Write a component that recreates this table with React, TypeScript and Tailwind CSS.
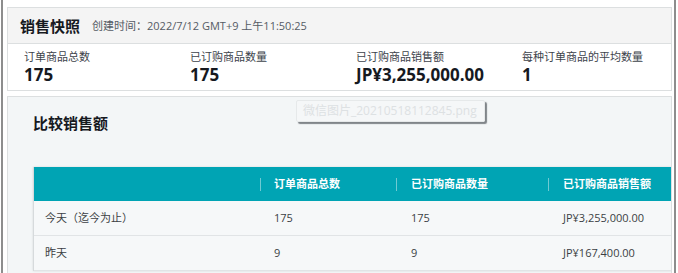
const metrics = [
  { label: "订单商品总数", value: "175" },
  { label: "已订购商品数量", value: "175" },
  { label: "已订购商品销售额", value: "JP¥3,255,000.00" },
  { label: "每种订单商品的平均数量", value: "1" },
];

const rows = [
  { name: "今天（迄今为止）", units: "175", ordered: "175", sales: "JP¥3,255,000.00" },
  { name: "昨天", units: "9", ordered: "9", sales: "JP¥167,400.00" },
];

const font = { fontFamily: '"Open Sans", "Noto Sans CJK SC", sans-serif' };

export default function App() {
  return (
    <div className="relative h-[273px] w-[678px] overflow-hidden bg-white" style={font}>
      <div className="ml-px mr-[2px] h-full border-x-2 border-[#8d8d8d] bg-white pl-[4px] pr-[1px] pt-[7px]">
        {/* snapshot card */}
        <div className="w-[665px] border border-[#dcdfe0] bg-white">
          <div className="flex h-[36px] items-center gap-3 border-b border-[#dcdfe0] bg-[#f4f4f4] pl-[12px] pt-[1px]">
            <h1 className="text-[15px] font-bold leading-none text-[#16191f]">销售快照</h1>
            <span className="text-[11px] text-[#545b64]">创建时间：2022/7/12 GMT+9 上午11:50:25</span>
          </div>
          <div className="grid h-[46px] grid-cols-[166px_166px_166px_166px] pl-[16px] pt-[5px]">
            {metrics.map((m) => (
              <div key={m.label} className="flex flex-col gap-[2px]">
                <p className="whitespace-nowrap text-[11px] leading-[15px] text-[#3d434b]">{m.label}</p>
                <p className="whitespace-nowrap text-[17px] font-bold leading-[18px] text-[#16191f]">{m.value}</p>
              </div>
            ))}
          </div>
        </div>

        {/* compare card */}
        <div className="mt-[5px] h-[200px] w-[665px] overflow-hidden border border-[#dcdfe0] bg-[#f3f6f7]">
          <h2 className="pl-[25px] pt-[15px] text-[15px] font-bold leading-[22px] text-[#16191f]">比较销售额</h2>
          <div className="ml-[25px] mt-[33px] w-[700px] border-l border-[#d6dadc] shadow-[0_0_2px_rgba(0,0,0,0.12)]">
            <div className="flex h-[34px] items-center bg-[#00a4b4] text-[11px] font-bold text-white">
              <div className="w-[226px]" />
              <div className="flex w-[136px] items-center">
                <span className="h-[13px] w-px bg-[#6fcad3]" />
                <span className="pl-[13px]">订单商品总数</span>
              </div>
              <div className="flex w-[152px] items-center">
                <span className="h-[13px] w-px bg-[#6fcad3]" />
                <span className="pl-[14px]">已订购商品数量</span>
              </div>
              <div className="flex flex-1 items-center">
                <span className="h-[13px] w-px bg-[#6fcad3]" />
                <span className="pl-[14px]">已订购商品销售额</span>
              </div>
            </div>
            {rows.map((r) => (
              <div
                key={r.name}
                className="flex h-[35px] items-center border-b border-[#e1e4e6] bg-[#f6f8f9] text-[11px] text-[#3b3f44]"
              >
                <div className="w-[226px] pl-[11px]">{r.name}</div>
                <div className="w-[136px] pl-[14px]">{r.units}</div>
                <div className="w-[152px] pl-[15px]">{r.ordered}</div>
                <div className="flex-1 pl-[15px]">{r.sales}</div>
              </div>
            ))}
          </div>
        </div>
      </div>

      {/* dragged file ghost */}
      <div className="absolute left-[296px] top-[100px] flex h-[22px] w-[189px] items-center overflow-hidden rounded-[2px] border border-[#e6e9ea] bg-[#f5f7f8]/80 pl-[6px] shadow-[2px_2px_1px_rgba(90,95,100,0.75)]">
        <span className="whitespace-nowrap text-[12px] leading-none text-[#dde1e3]">微信图片_20210518112845.png</span>
      </div>
    </div>
  );
}
